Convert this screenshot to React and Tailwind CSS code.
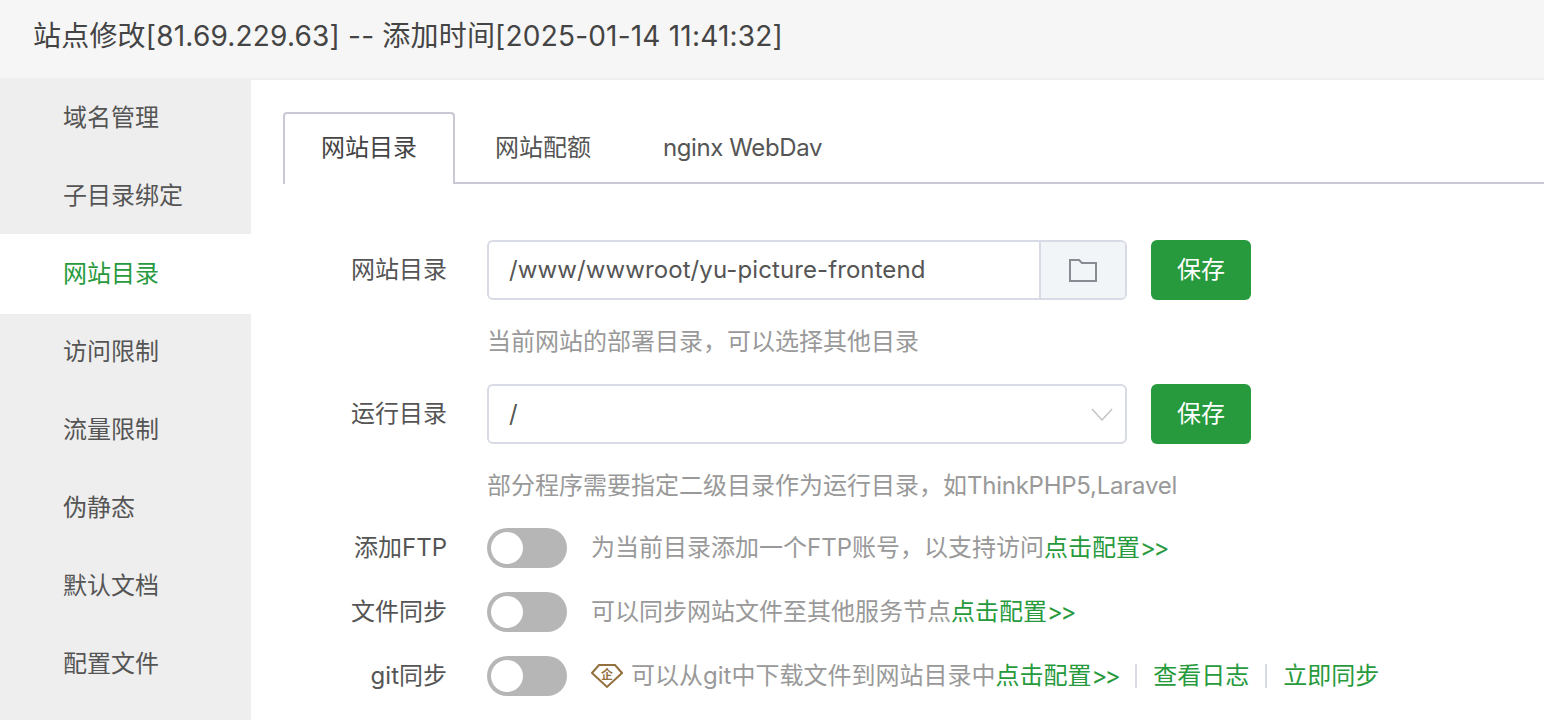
import React from 'react';

const FONT = 'Inter, "Noto Sans CJK SC", sans-serif';

const menuItems = ['域名管理', '子目录绑定', '网站目录', '访问限制', '流量限制', '伪静态', '默认文档', '配置文件'];

function Toggle() {
  return (
    <div className="w-[80px] h-[40px] rounded-full bg-[#b6b6b6] p-[4px] shrink-0">
      <div className="w-[32px] h-[32px] rounded-full bg-white"></div>
    </div>
  );
}

function SaveButton() {
  return (
    <button className="ml-[24px] w-[100px] h-[60px] rounded-[6px] bg-[#279a3d] text-white text-[24px]">保存</button>
  );
}

function ConfigLink() {
  return <a className="text-[#279a3d]">点击配置<span className="tracking-[-2.5px] mr-[1px]">&gt;&gt;</span></a>;
}

function Divider() {
  return <span className="w-[2px] h-[24px] bg-[#d8dbe5] mx-[16px]"></span>;
}

function SwitchRow({ label, children }) {
  return (
    <div className="flex items-center h-[40px] mb-[24px]">
      <div className="w-[164px] mr-[40px] text-right text-[#555]">{label}</div>
      <Toggle />
      <div className="ml-[24px] flex items-center text-[#999]">{children}</div>
    </div>
  );
}

function menuClass(i) {
  if (i === 2) return 'h-[80px] pl-[63px] flex items-center bg-white text-[#279a3d]';
  if (i === 0 || i === 3) return 'h-[76px] pl-[63px] flex items-center';
  return 'h-[78px] pt-[2px] pl-[63px] flex items-center';
}

function App() {
  return (
    <div className="w-[1544px] h-[720px] overflow-hidden bg-white text-[24px] text-[#555]" style={{ fontFamily: FONT }}>
      {/* Title */}
      <div className="h-[80px] pb-[6px] bg-[#f6f6f6] border-b-2 border-[#eeeeee] pl-[33px] flex items-center text-[28px] text-[#444] tracking-[0.2px]">
        站点修改[81.69.229.63] -- 添加时间[2025-01-14 11:41:32]
      </div>

      <div className="flex h-[640px]">
        {/* Side menu */}
        <div className="w-[251px] shrink-0 bg-[#eeeeee]">
          {menuItems.map((item, i) => (
            <div key={item} className={menuClass(i)}>
              {item}
            </div>
          ))}
        </div>

        {/* Content */}
        <div className="flex-1 pl-[32px] pt-[32px]">
          <div className="flex h-[72px] border-b-2 border-[#c9c9d6]">
            <div className="w-[172px] h-[72px] pb-[2px] border-2 border-b-0 border-[#c9c9d6] rounded-t-[4px] bg-white flex items-center justify-center text-[#444]">网站目录</div>
            <div className="pl-[40px] pr-[41px] pt-[2px] flex items-center">网站配额</div>
            <div className="pl-[31px] pt-[2px] flex items-center tracking-[-0.4px]">nginx WebDav</div>
          </div>

          <div className="mt-[56px]">
            <div className="flex items-center">
              <div className="w-[164px] mr-[40px] text-right">网站目录</div>
              <div className="w-[640px] h-[60px] flex border-2 border-[#d8dbe5] rounded-[6px] overflow-hidden">
                <div className="flex-1 pl-[20px] flex items-center tracking-[0.1px]">/www/wwwroot/yu-picture-frontend</div>
                <div className="w-[86px] bg-[#f2f5f8] border-l-2 border-[#d8dbe5] flex items-center justify-center">
                  <svg width="30" height="24" viewBox="0 0 30 24" fill="none" stroke="#888c92" strokeWidth="2">
                    <path d="M2 2H11L14 5H28V23H2Z" />
                  </svg>
                </div>
              </div>
              <SaveButton />
            </div>
            <div className="ml-[204px] mt-[28px] h-[28px] leading-[28px] text-[#999]">当前网站的部署目录，可以选择其他目录</div>

            <div className="flex items-center mt-[28px]">
              <div className="w-[164px] mr-[40px] text-right">运行目录</div>
              <div className="w-[640px] h-[60px] flex items-center justify-between border-2 border-[#d8dbe5] rounded-[6px] pl-[20px] pr-[12px]">
                <span>/</span>
                <svg width="22" height="13" viewBox="0 0 22 13" fill="none" stroke="#c4c4c4" strokeWidth="1.5">
                  <path d="M1 1L11 12L21 1" />
                </svg>
              </div>
              <SaveButton />
            </div>
            <div className="ml-[204px] mt-[28px] mb-[28px] h-[28px] leading-[28px] text-[#999]">部分程序需要指定二级目录作为运行目录，如<span className="tracking-[-0.25px]">ThinkPHP5,Laravel</span></div>

            <SwitchRow label="添加FTP">
              为当前目录添加一个FTP账号，以支持访问<ConfigLink />
            </SwitchRow>
            <SwitchRow label="文件同步">
              可以同步网站文件至其他服务节点<ConfigLink />
            </SwitchRow>
            <SwitchRow label="git同步">
              <svg width="32" height="26" viewBox="0 0 32 26" fill="none" stroke="#94703f" strokeWidth="2" className="mr-[8px]">
                <path d="M8 2H24L31 10L16 24L1 10Z" />
                <text x="16" y="16" textAnchor="middle" fontSize="12" fontWeight="700" fill="#94703f" stroke="none">企</text>
              </svg>
              可以从git中下载文件到网站目录中<ConfigLink />
              <Divider />
              <a className="text-[#279a3d]">查看日志</a>
              <Divider />
              <a className="text-[#279a3d]">立即同步</a>
            </SwitchRow>
          </div>
        </div>
      </div>
    </div>
  );
}

export default App;
